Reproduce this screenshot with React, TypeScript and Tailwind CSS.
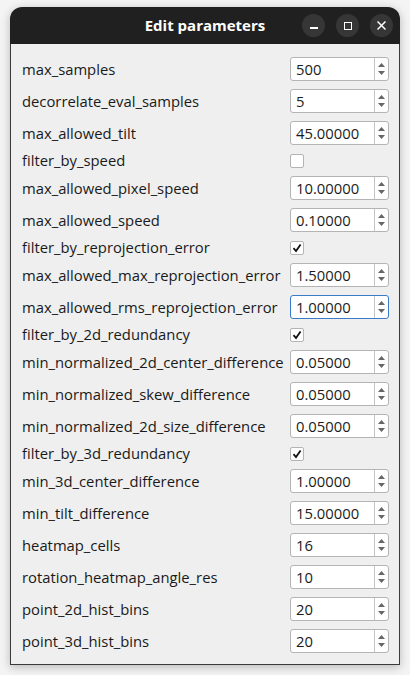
import React from "react";

type Row =
  | { kind: "spin"; label: string; value: string; focused?: boolean }
  | { kind: "check"; label: string; checked: boolean };

const rows: Row[] = [
  { kind: "spin", label: "max_samples", value: "500" },
  { kind: "spin", label: "decorrelate_eval_samples", value: "5" },
  { kind: "spin", label: "max_allowed_tilt", value: "45.00000" },
  { kind: "check", label: "filter_by_speed", checked: false },
  { kind: "spin", label: "max_allowed_pixel_speed", value: "10.00000" },
  { kind: "spin", label: "max_allowed_speed", value: "0.10000" },
  { kind: "check", label: "filter_by_reprojection_error", checked: true },
  { kind: "spin", label: "max_allowed_max_reprojection_error", value: "1.50000" },
  { kind: "spin", label: "max_allowed_rms_reprojection_error", value: "1.00000", focused: true },
  { kind: "check", label: "filter_by_2d_redundancy", checked: true },
  { kind: "spin", label: "min_normalized_2d_center_difference", value: "0.05000" },
  { kind: "spin", label: "min_normalized_skew_difference", value: "0.05000" },
  { kind: "spin", label: "min_normalized_2d_size_difference", value: "0.05000" },
  { kind: "check", label: "filter_by_3d_redundancy", checked: true },
  { kind: "spin", label: "min_3d_center_difference", value: "1.00000" },
  { kind: "spin", label: "min_tilt_difference", value: "15.00000" },
  { kind: "spin", label: "heatmap_cells", value: "16" },
  { kind: "spin", label: "rotation_heatmap_angle_res", value: "10" },
  { kind: "spin", label: "point_2d_hist_bins", value: "20" },
  { kind: "spin", label: "point_3d_hist_bins", value: "20" },
];

function SpinBox({ value, focused }: { value: string; focused?: boolean }) {
  return (
    <div
      className={`flex h-[24px] w-[99px] rounded-[3px] border bg-white ${
        focused ? "border-[#3a7bc8]" : "border-[#b4b4b4]"
      }`}
    >
      <div className="flex flex-1 items-center pl-[5px] text-[14.8px] text-[#1a1a1a]">{value}</div>
      <div className="flex w-[14px] flex-col items-center justify-center gap-[4px] border-l border-[#c4c4c4]">
        <svg width="7" height="4" viewBox="0 0 7 4">
          <path d="M0 4 L3.5 0 L7 4 Z" fill="#666" />
        </svg>
        <svg width="7" height="4" viewBox="0 0 7 4">
          <path d="M0 0 L3.5 4 L7 0 Z" fill="#666" />
        </svg>
      </div>
    </div>
  );
}

function CheckBox({ checked }: { checked: boolean }) {
  return (
    <div className="flex h-[14px] w-[14px] items-center justify-center rounded-[2px] border border-[#b4b4b4] bg-white">
      {checked && (
        <svg width="10" height="10" viewBox="0 0 10 10">
          <path d="M1.5 5.2 L4 8 L8.6 1.5" fill="none" stroke="#111" strokeWidth="1.8" />
        </svg>
      )}
    </div>
  );
}

export default function App() {
  return (
    <div
      className="h-[675px] w-[410px] bg-[#f4f4f4] pt-[7px] pl-[10px]"
      style={{ fontFamily: '"Open Sans", "DejaVu Sans", sans-serif' }}
    >
      <div className="flex h-[658px] w-[390px] flex-col overflow-hidden rounded-t-[12px] shadow-[0_2px_10px_rgba(0,0,0,0.25)]">
        <div className="relative flex h-[37px] items-center justify-center bg-[#202020]">
          <span className="text-[15px] font-bold text-white">Edit parameters</span>
          <div className="absolute right-[7px] top-[7px] flex gap-[11px]">
            <div className="flex h-[23px] w-[23px] items-center justify-center rounded-full bg-[#363636]">
              <div className="mt-[5px] h-[1.5px] w-[8px] bg-white" />
            </div>
            <div className="flex h-[23px] w-[23px] items-center justify-center rounded-full bg-[#363636]">
              <div className="h-[8px] w-[8px] border-[1.5px] border-white" />
            </div>
            <div className="flex h-[23px] w-[23px] items-center justify-center rounded-full bg-[#363636]">
              <svg width="9" height="9" viewBox="0 0 9 9">
                <path d="M0.5 0.5 L8.5 8.5 M8.5 0.5 L0.5 8.5" stroke="white" strokeWidth="1.5" />
              </svg>
            </div>
          </div>
        </div>
        <div className="flex flex-1 flex-col gap-[6px] border-x border-b border-[#3a3a3a] bg-[#efefef] pt-[12px] pl-[11px] pr-[10px]">
          {rows.map((r) => (
            <div
              key={r.label}
              className={`flex items-center justify-between ${r.kind === "spin" ? "h-[26px]" : "h-[17px]"}`}
            >
              <span className="text-[14.8px] text-[#1a1a1a]">{r.label}</span>
              {r.kind === "spin" ? (
                <SpinBox value={r.value} focused={r.focused} />
              ) : (
                <div className="w-[99px]">
                  <CheckBox checked={r.checked} />
                </div>
              )}
            </div>
          ))}
        </div>
      </div>
    </div>
  );
}
